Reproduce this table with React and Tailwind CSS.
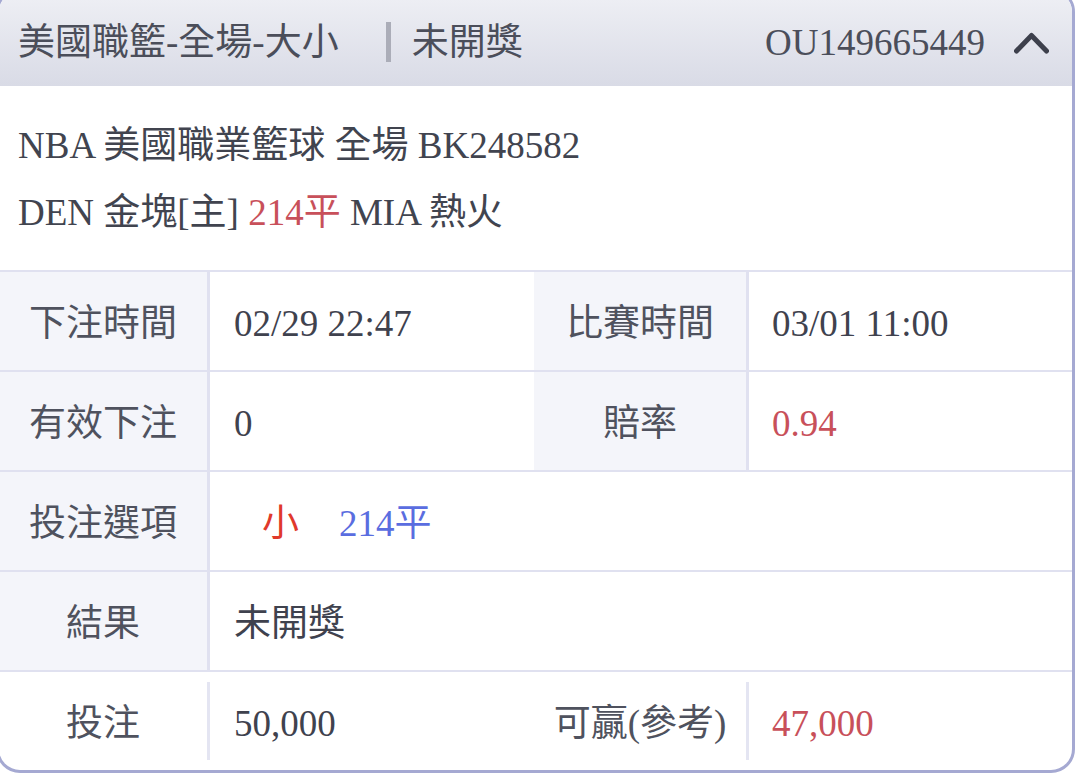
const font = { fontFamily: '"Liberation Serif", "Noto Sans CJK TC", serif' }

function Label({ children, className = '' }) {
  return (
    <div className={`flex items-center justify-center pt-[5px] bg-[#f4f5fa] text-[#4f525e] ${className}`}>
      {children}
    </div>
  )
}

function Value({ children, className = '' }) {
  return <div className={`flex items-center pt-[5px] text-[#3f424e] ${className}`}>{children}</div>
}

export default function App() {
  return (
    <div className="w-[1080px] h-[775px] overflow-hidden bg-white text-[37px] leading-none" style={font}>
      <div className="-mt-[12px] -ml-[4px] w-[1079px] h-[785px] rounded-[24px] border-[3px] border-[#a5a9d2] overflow-hidden flex flex-col bg-white">
        {/* header */}
        <div className="h-[95px] shrink-0 pt-[7px] pl-[19px] pr-[23px] flex items-center bg-gradient-to-b from-[#eff0f5] to-[#d9dbe6] text-[#4b4e5a]">
          <span>美國職籃-全場-大小</span>
          <div className="ml-[47px] w-[5px] h-[40px] bg-[#abadb8]" />
          <span className="ml-[21px]">未開獎</span>
          <span className="ml-auto">OU149665449</span>
          <svg className="ml-[29px]" width="35" height="23" viewBox="0 0 35 23" fill="none">
            <polyline points="2.5,20 17.5,4.5 32.5,20" stroke="#3d404c" strokeWidth="5" strokeLinecap="round" strokeLinejoin="round" />
          </svg>
        </div>

        {/* match info */}
        <div className="h-[184px] shrink-0 pl-[19px] pt-[2px] flex flex-col justify-center leading-[67px] text-[#41444f]">
          <div>NBA 美國職業籃球 全場 BK248582</div>
          <div>
            DEN 金塊[主] <span className="text-[#c8505a]">214平</span> MIA 熱火
          </div>
        </div>

        {/* table */}
        <div className="flex flex-col">
          <div className="h-[100px] border-t-2 border-[#e0e1f0] flex">
            <Label className="w-[211px] border-r-[3px] border-[#e0e1f0]">下注時間</Label>
            <Value className="w-[324px] pl-[24px]">02/29 22:47</Value>
            <Label className="w-[215px] border-r-[3px] border-[#e0e1f0]">比賽時間</Label>
            <Value className="flex-1 pl-[23px]">03/01 11:00</Value>
          </div>
          <div className="h-[100px] border-t-2 border-[#e0e1f0] flex">
            <Label className="w-[211px] border-r-[3px] border-[#e0e1f0]">有效下注</Label>
            <Value className="w-[324px] pl-[24px]">0</Value>
            <Label className="w-[215px] border-r-[3px] border-[#e0e1f0]">賠率</Label>
            <Value className="flex-1 pl-[23px] text-[#c8505a]">0.94</Value>
          </div>
          <div className="h-[100px] border-t-2 border-[#e0e1f0] flex">
            <Label className="w-[211px] border-r-[3px] border-[#e0e1f0]">投注選項</Label>
            <Value className="flex-1 pl-[52px]">
              <span className="text-[#e0392b]">小</span>
              <span className="ml-[40px] text-[#5a6de0]">214平</span>
            </Value>
          </div>
          <div className="h-[100px] border-t-2 border-[#e0e1f0] flex">
            <Label className="w-[211px] border-r-[3px] border-[#e0e1f0]">結果</Label>
            <Value className="flex-1 pl-[24px]">未開獎</Value>
          </div>
          <div className="h-[100px] border-t-2 border-[#e0e1f0] flex items-center">
            <div className="w-[208px] h-full pt-[5px] flex items-center justify-center text-[#4f525e]">投注</div>
            <div className="w-[3px] h-[78px] bg-[#e4e5f2]" />
            <Value className="w-[324px] h-full pl-[24px]">50,000</Value>
            <div className="w-[212px] h-full pt-[5px] flex items-center justify-center text-[#4f525e]">可贏(參考)</div>
            <div className="w-[3px] h-[78px] bg-[#e4e5f2]" />
            <Value className="flex-1 h-full pl-[23px] text-[#c8505a]">47,000</Value>
          </div>
        </div>
      </div>
    </div>
  )
}
